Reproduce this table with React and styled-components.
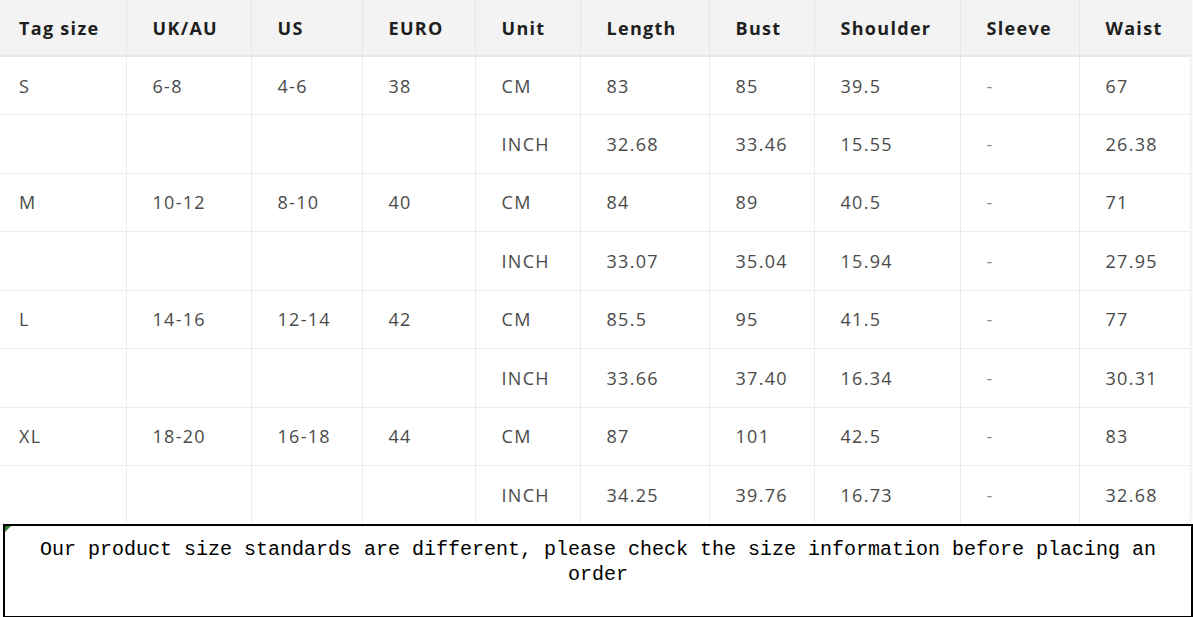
import React from "react";
import styled, { createGlobalStyle } from "styled-components";

const GlobalStyle = createGlobalStyle`
  html, body {
    margin: 0;
    padding: 0;
    background: #ffffff;
  }
  body {
    font-family: "Open Sans", "Noto Sans", sans-serif;
  }
`;

const columns = [
    { label: "Tag size", width: 126 },
    { label: "UK/AU", width: 125 },
    { label: "US", width: 111 },
    { label: "EURO", width: 113 },
    { label: "Unit", width: 105 },
    { label: "Length", width: 129 },
    { label: "Bust", width: 105 },
    { label: "Shoulder", width: 146 },
    { label: "Sleeve", width: 119 },
    { label: "Waist", width: 111 },
];

const sizes = [
    { tag: "S", uk: "6-8", us: "4-6", euro: "38", cm: ["83", "85", "39.5", "-", "67"], inch: ["32.68", "33.46", "15.55", "-", "26.38"] },
    { tag: "M", uk: "10-12", us: "8-10", euro: "40", cm: ["84", "89", "40.5", "-", "71"], inch: ["33.07", "35.04", "15.94", "-", "27.95"] },
    { tag: "L", uk: "14-16", us: "12-14", euro: "42", cm: ["85.5", "95", "41.5", "-", "77"], inch: ["33.66", "37.40", "16.34", "-", "30.31"] },
    { tag: "XL", uk: "18-20", us: "16-18", euro: "44", cm: ["87", "101", "42.5", "-", "83"], inch: ["34.25", "39.76", "16.73", "-", "32.68"] },
];

function App() {
    return (
        <Page>
            <GlobalStyle />
            <TableWrap>
                <Table>
                    <colgroup>
                        {columns.map((c) => (
                            <col key={c.label} style={{ width: c.width }} />
                        ))}
                    </colgroup>
                    <thead>
                        <tr>
                            {columns.map((c, i) => (
                                <HeadCell key={c.label} $first={i === 0}>{c.label}</HeadCell>
                            ))}
                        </tr>
                    </thead>
                    <tbody>
                        {sizes.map((s, si) => {
                            const last = si === sizes.length - 1;
                            return (
                                <React.Fragment key={s.tag}>
                                    <tr>
                                        <Cell $first>{s.tag}</Cell>
                                        <Cell>{s.uk}</Cell>
                                        <Cell>{s.us}</Cell>
                                        <Cell>{s.euro}</Cell>
                                        <Cell>CM</Cell>
                                        {s.cm.map((v, i) => (
                                            <Cell key={i} $dash={v === "-"}>{v}</Cell>
                                        ))}
                                    </tr>
                                    <tr>
                                        <Cell $first $last={last} />
                                        <Cell $last={last} />
                                        <Cell $last={last} />
                                        <Cell $last={last} />
                                        <Cell $last={last}>INCH</Cell>
                                        {s.inch.map((v, i) => (
                                            <Cell key={i} $dash={v === "-"} $last={last}>{v}</Cell>
                                        ))}
                                    </tr>
                                </React.Fragment>
                            );
                        })}
                    </tbody>
                </Table>
            </TableWrap>
            <Notice>
                <Corner />
                Our product size standards are different, please check the size information before placing an order
            </Notice>
        </Page>
    );
}

export default App;


const Page = styled.div`
    width: 1193px;
    height: 617px;
    overflow: hidden;
`;

const TableWrap = styled.div`
    width: 1190px;
    border-right: 1px solid #ececec;
    border-bottom: 1px solid #ececec;
    border-bottom-right-radius: 8px;
    box-shadow: 1px 1px 3px rgba(0, 0, 0, 0.05);
    overflow: hidden;
`;

const Table = styled.table`
    width: 1190px;
    table-layout: fixed;
    border-collapse: collapse;
    font-size: 18px;
    letter-spacing: 1.3px;
`;

const HeadCell = styled.th`
    height: 56px;
    padding: 0 0 0 ${(p) => (p.$first ? "19px" : "26px")};
    box-sizing: border-box;
    background: #f3f3f3;
    color: #1f1f1f;
    font-weight: 700;
    text-align: left;
    border-left: ${(p) => (p.$first ? "none" : "1px solid #e6e6e6")};
    border-bottom: 2px solid #e8e8e8;
    white-space: nowrap;
`;

const Cell = styled.td`
    height: 58.5px;
    padding: 0 0 0 ${(p) => (p.$first ? "19px" : "26px")};
    box-sizing: border-box;
    color: ${(p) => (p.$dash ? "#8a8a8a" : "#4a4a4a")};
    text-align: left;
    border-left: ${(p) => (p.$first ? "none" : "1px solid #ececec")};
    border-bottom: ${(p) => (p.$last ? "none" : "1px solid #ececec")};
    white-space: nowrap;
`;

const Notice = styled.div`
    position: relative;
    margin: -1px 0 0 3px;
    width: 1190px;
    height: 94px;
    box-sizing: border-box;
    border: 2px solid #000;
    padding: 11px 20px 0;
    font-family: "Liberation Mono", "DejaVu Sans Mono", monospace;
    font-size: 20px;
    line-height: 25px;
    color: #000;
    text-align: center;
`;

const Corner = styled.span`
    position: absolute;
    top: 0;
    left: 0;
    width: 0;
    height: 0;
    border-top: 6px solid #2e7d32;
    border-right: 6px solid transparent;
`;
